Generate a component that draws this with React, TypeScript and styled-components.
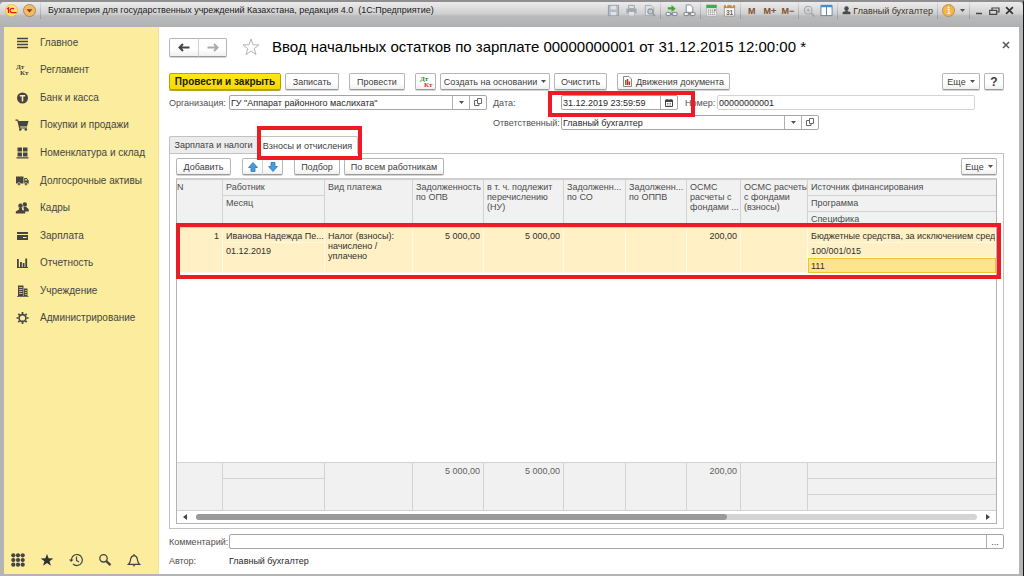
import React from 'react';
import styled, { createGlobalStyle, css } from 'styled-components';

const Global = createGlobalStyle`
  * { box-sizing: border-box; }
  body { margin: 0; background: #9b9b9d; }
  body, button, input, table {
    font-family: "Liberation Sans", Arial, sans-serif;
    font-size: 9px;
    line-height: 10px;
    color: #3c3c3c;
  }
  button { padding: 0; cursor: default; }
  svg { display: block; flex: none; }
`;

/* ---------- window frame ---------- */

const Window = styled.div`
  display: flex;
  flex-direction: column;
  height: 100vh;
  min-height: 480px;
  border-top: 2px solid #908e90;
  border-right: 1px solid #161616;
`;

const TitleBar = styled.header`
  display: flex;
  align-items: flex-start;
  height: 25px;
  flex: none;
  padding: 0 9px 0 5px;
  border-radius: 4px 4px 0 0;
  background: linear-gradient(#ececec, #cfcfd0 12px, #b9babc 14px, #b0b1b3);
`;

const BarGroup = styled.div<{ $gap: number }>`
  display: flex;
  align-items: center;
  height: 17px;
  gap: ${p => p.$gap}px;
`;

const BarButton = styled.button`
  display: flex;
  align-items: center;
  justify-content: center;
  gap: 2px;
  border: 0;
  background: none;
  color: #403020;
`;

const MemoryButton = styled(BarButton)`
  min-width: 13px;
  font-weight: bold;
  color: #80502c;
`;

const BarLine = styled.span`
  width: 1px;
  height: 17px;
  margin: 0 -1px;
  background: linear-gradient(#dcdcdc, #999);
`;

const Caption = styled.span`
  flex: 1;
  padding-left: 8px;
  line-height: 17px;
  color: #202020;
  white-space: pre;
  overflow: hidden;
`;

const Body = styled.div`
  display: flex;
  flex: 1;
  min-height: 0;
  border: solid #b4b4b6;
  border-width: 0 4px 2px 4px;
  background: #fff;
`;

/* ---------- side panel ---------- */

const Sidebar = styled.nav`
  display: flex;
  flex-direction: column;
  justify-content: space-between;
  flex: none;
  width: 155px;
  border-right: 1px solid #efe09a;
  background: #fbec9e;
`;

const Sections = styled.div`
  display: flex;
  flex-direction: column;
  height: 305px;
  padding-top: 2px;
`;

const Section = styled.a`
  display: flex;
  flex: 1;
  align-items: center;
  gap: 11px;
  padding-left: 11px;
  font-size: 10px;
  line-height: 12px;
  color: #454545;
  text-decoration: none;
  white-space: nowrap;
`;

const Tools = styled.div`
  display: flex;
  gap: 15px;
  padding: 0 7px 7px;
`;

const ToolButton = styled.button`
  width: 14px;
  height: 14px;
  border: 0;
  background: none;
`;

/* ---------- form ---------- */

const Form = styled.main`
  display: flex;
  flex-direction: column;
  flex: 1;
  min-width: 0;
  padding: 10px 15px 6px 10px;
`;

const Heading = styled.div`
  display: flex;
  align-items: center;
  height: 20px;
  flex: none;
`;

const Title = styled.h1`
  flex: 1;
  margin: 0 0 0 12px;
  font-size: 15px;
  line-height: 18px;
  font-weight: normal;
  color: #000;
  white-space: nowrap;
`;

const CloseButton = styled.button`
  width: 9px;
  height: 9px;
  margin: 0 -7px 4px 0;
  border: 0;
  background: none;
`;

const Button = styled.button<{ $primary?: boolean; $w?: number }>`
  display: flex;
  align-items: center;
  justify-content: center;
  gap: 4px;
  height: 17px;
  width: ${p => (p.$w ? p.$w + 'px' : 'auto')};
  border: 1px solid #b5b5b5;
  border-bottom-color: #9a9a9a;
  border-radius: 2px;
  background: linear-gradient(#fff, #fff 60%, #f0f0f0);
  box-shadow: 0 1px 0 #d5d5d5;
  white-space: nowrap;
  ${p => p.$primary && css`
    border-color: #b8a200;
    background: linear-gradient(#ffe81a, #f5d800);
    box-shadow: 0 1px 0 #b4a02c;
    font-size: 10px;
    font-weight: bold;
    color: #1e1a00;
  `}
`;

const HelpButton = styled(Button)`
  font-size: 12px;
  font-weight: bold;
`;

const Pair = styled.div`
  display: flex;
  button + button { border-left-color: #d0d0d0; border-radius: 0 2px 2px 0; margin-left: -1px; }
  button:first-child { border-radius: 2px 0 0 2px; }
`;

const HistoryPair = styled(Pair)`
  margin-right: 15px;
  button { height: 19px; }
`;

const Toolbar = styled.div`
  display: flex;
  height: 17px;
  flex: none;
`;

const CommandBar = styled(Toolbar)`
  margin-top: 16px;
`;

const Cluster = styled.div<{ $after?: number }>`
  display: flex;
  gap: 4px;
  margin-right: ${p => p.$after ?? 10}px;
`;

const Spacer = styled.span`
  flex: 1;
`;

const FieldRow = styled.div`
  display: flex;
  height: 15px;
  flex: none;
  margin-top: 5px;
`;

const AuthorRow = styled(FieldRow)`
  margin-top: 4px;
`;

const Label = styled.label<{ $w: number; $indent?: number }>`
  flex: none;
  width: ${p => p.$w}px;
  margin-left: ${p => p.$indent ?? 0}px;
  line-height: 16px;
  color: #505050;
  white-space: nowrap;
`;

const Field = styled.div<{ $w?: number; $after?: number; $pale?: boolean }>`
  display: flex;
  position: relative;
  flex: ${p => (p.$w ? 'none' : '1')};
  width: ${p => (p.$w ? p.$w + 'px' : 'auto')};
  height: 15px;
  margin-right: ${p => p.$after ?? 0}px;
  border: 1px solid ${p => (p.$pale ? '#d4d4d4' : '#a6a6a6')};
  border-radius: 2px;
  background: #fff;
`;

const Input = styled.input`
  flex: 1;
  min-width: 0;
  height: 13px;
  padding: 0 1px;
  border: 0;
  outline: 0;
  background: none;
  color: #282828;
`;

const FieldButton = styled.button`
  display: flex;
  align-items: center;
  justify-content: center;
  width: 17px;
  height: 13px;
  border: 0;
  border-left: 1px solid #b0b0b0;
  background: none;
`;

const Marker = styled.span`
  position: absolute;
  z-index: 2;
  border: 4px solid #ed1c24;
  pointer-events: none;
`;

const DateMarker = styled(Marker)`
  inset: -5px -18px -8px -14px;
`;

const TabMarker = styled(Marker)`
  inset: -11px -5px -6px -1px;
`;

const RowMarker = styled(Marker)`
  top: 43px;
  left: -1px;
  right: -5px;
  height: 56px;
`;

/* ---------- tabs and table ---------- */

const Tabs = styled.div`
  display: flex;
  flex: none;
  height: 17px;
  margin-top: 6px;
`;

const Tab = styled.button<{ $active?: boolean }>`
  position: relative;
  width: ${p => (p.$active ? 101 : 89)}px;
  height: ${p => (p.$active ? 18 : 17)}px;
  border: 1px solid #c2c2c2;
  border-bottom: 0;
  border-radius: 2px 2px 0 0;
  background: ${p => (p.$active ? '#fff' : '#ececec')};
  white-space: nowrap;
  & + & { margin-left: -1px; }
`;

const Panel = styled.section`
  display: flex;
  flex-direction: column;
  flex: 1;
  min-height: 0;
  padding: 4px 6px;
  border: 1px solid #c2c2c2;
`;

const Frame = styled.div`
  position: relative;
  display: flex;
  flex-direction: column;
  flex: 1;
  min-height: 0;
  margin-top: 3px;
  border: 1px solid #b4b4b4;
  border-top-width: 2px;
  border-top-color: #cfcfcf;
`;

const TableBox = styled.div`
  flex: 1;
  min-height: 0;
`;

const Table = styled.table`
  width: 100%;
  height: 100%;
  table-layout: fixed;
  border-collapse: separate;
  border-spacing: 0;
`;

const Col = styled.col<{ $w?: number }>`
  width: ${p => (p.$w ? p.$w + 'px' : 'auto')};
`;

const HeadCell = styled.th<{ $flush?: boolean }>`
  height: 16px;
  padding: 2px 0 0 ${p => (p.$flush ? 0 : 3)}px;
  border: solid #d2d2d2;
  border-width: 0 1px 1px 0;
  background: #f1f1f1;
  font-weight: normal;
  text-align: left;
  vertical-align: top;
  white-space: pre;
  overflow: hidden;
  color: #4c4c4c;
  &:last-child { border-right: 0; }
`;

const DataCell = styled.td<{ $num?: boolean; $focus?: boolean }>`
  height: 15px;
  padding: ${p => (p.$num ? '3px 3px 0 0' : '3px 0 0 3px')};
  border: solid #fff9e6;
  border-width: 0 1px 1px 0;
  background: #fff1c5;
  text-align: ${p => (p.$num ? 'right' : 'left')};
  vertical-align: top;
  white-space: pre;
  overflow: hidden;
  color: #303030;
  ${p => p.$focus && css`
    padding: 2px 0 0 2px;
    border: 1px solid #f2c230;
    background: #ffe48c;
  `}
`;

const EmptyCell = styled.td`
  padding: 0;
  background: #fff;
`;

const FootCell = styled.td<{ $first?: boolean }>`
  height: ${p => (p.$first ? 17 : 16)}px;
  padding: 3px 3px 0 0;
  border: solid #d2d2d2;
  border-width: ${p => (p.$first ? '1px 1px 1px 0' : '0 1px 1px 0')};
  background: #f1f1f1;
  text-align: right;
  vertical-align: top;
  color: #606060;
  &:last-child { border-right: 0; }
`;

const Scroll = styled.div`
  display: flex;
  align-items: center;
  gap: 9px;
  height: 12px;
  flex: none;
  padding: 0 6px;
  background: #fff;
`;

const Track = styled.div`
  flex: 1;
  height: 6px;
  border-radius: 3px;
  background: #d4d4d4;
`;

const Thumb = styled.div`
  width: 68%;
  height: 6px;
  border-radius: 3px;
  background: #999;
`;

const Value = styled.output`
  line-height: 16px;
  color: #282828;
`;

/* ---------- icons ---------- */

const Icon = ({ size = 14, children }: { size?: number; children: React.ReactNode }) => (
  <svg width={size} height={size} viewBox="0 0 14 14" fill="none" stroke="none">{children}</svg>
);

const DtKt = ({ a, b }: { a: string; b: string }) => (
  <svg width="14" height="14" viewBox="0 0 14 14" fontFamily="Liberation Serif, serif" fontWeight="bold" fontSize="7">
    <text x="1" y="6" fill={a}>Дт</text>
    <text x="5" y="12" fill={b}>Кт</text>
  </svg>
);

const Caret = () => (
  <svg width="5" height="3" viewBox="0 0 5 3"><path d="M0 0h5L2.500 3z" fill="#505050" /></svg>
);

const OpenIcon = () => (
  <svg width="9" height="9" viewBox="0 0 9 9" fill="none" stroke="#666">
    <path d="M3.500 .5h4v5h-4zM3.500 2.500h-3v5h4.500v-2" />
  </svg>
);

const Arrow = ({ back, color }: { back?: boolean; color: string }) => (
  <svg width="12" height="9" viewBox="0 0 12 9" fill="none" stroke={color} strokeWidth="2">
    <path d={back ? 'M11.500 4.500H2M5 1 1.500 4.500 5 8' : 'M.5 4.500H10M7 1l3.500 3.500L7 8'} />
  </svg>
);

const BlueArrow = ({ down }: { down?: boolean }) => (
  <svg width="10" height="10" viewBox="0 0 10 10">
    <path d={down ? 'M3 .5h4v4h2.500L5 9.500.5 4.500H3z' : 'M3 9.500h4v-4h2.500L5 .5.5 5.500H3z'} fill="#459de0" stroke="#2a79b9" strokeWidth=".8" />
  </svg>
);

const ink = '#444';

const sections: { name: string; icon: React.ReactNode }[] = [
  { name: 'Главное', icon: <Icon><path d="M2 2.500h11M2 5.500h11M2 8.500h11M2 11.500h11" stroke={ink} strokeWidth="1.500" /></Icon> },
  { name: 'Регламент', icon: <DtKt a={ink} b={ink} /> },
  { name: 'Банк и касса', icon: <Icon><circle cx="7.500" cy="7" r="5.500" fill={ink} /><path d="M4.800 4.800h5.400M7.500 4.800v5.700" stroke="#fbec9e" strokeWidth="1.600" /></Icon> },
  { name: 'Покупки и продажи', icon: <Icon><path d="M.5 1.500h2.500l.6 1.500H13.500l-1.500 5.500H4.800l.4 1H12v1H4.200L2.300 2.700H.5z" fill={ink} /><circle cx="5.300" cy="11.500" r="1.300" fill={ink} /><circle cx="10.800" cy="11.500" r="1.300" fill={ink} /></Icon> },
  { name: 'Номенклатура и склад', icon: <Icon><path d="M2.500 1.500h4.500v4H2.500zM8 1.500h4.500v4H8zM2.500 6.500h4.500v4H2.500zM8 6.500h4.500v4H8zM1.500 11.300h12v1.200h-12z" fill={ink} /></Icon> },
  { name: 'Долгосрочные активы', icon: <Icon><path d="M1 2.500h7.500v7H1zM9.200 4h2.600l1.900 2.500v3H9.200z" fill={ink} /><path d="M10.200 5h1.300l1 1.500h-2.300z" fill="#fbec9e" /><circle cx="4" cy="10" r="1.500" fill={ink} stroke="#fbec9e" strokeWidth=".6" /><circle cx="11" cy="10" r="1.500" fill={ink} stroke="#fbec9e" strokeWidth=".6" /></Icon> },
  { name: 'Кадры', icon: <Icon><circle cx="9.800" cy="3.500" r="2.200" fill={ink} /><path d="M8.500 6h2.800l2.400 2.200V10.500H9z" fill={ink} /><circle cx="5.500" cy="4.800" r="2.500" fill={ink} stroke="#fbec9e" strokeWidth=".5" /><path d="M.8 12.500V10.500L4 8.500V7h3v1.500l3.200 2v2z" fill={ink} /></Icon> },
  { name: 'Зарплата', icon: <Icon><path d="M2 3h11v2H2zM2 6h11v5H2z" fill={ink} /><path d="M8 8.500h3.500" stroke="#fbec9e" /></Icon> },
  { name: 'Отчетность', icon: <Icon><path d="M2 3h1.800v8H2zM5 6h1.800v5H5zM7.700 7h1.800v4H7.700zM10.300 2.500h1.800V11h-1.800zM2 11h11v1H2z" fill={ink} /></Icon> },
  { name: 'Учреждение', icon: <Icon><path d="M3 1.500h5.500v11H3zM9 4.500h3.500v8H9zM2 12h11.500v.8H2z" fill={ink} /><path d="M4 3.500h3.500M4 5.500h3.500M4 7.500h3.500M4 9.500h3.500M9.800 6.500h2M9.800 8.500h2M9.800 10.500h2" stroke="#fbec9e" strokeWidth=".7" /></Icon> },
  { name: 'Администрирование', icon: <Icon><circle cx="7.500" cy="7" r="3.400" stroke={ink} strokeWidth="1.600" /><path d="M7.500 1v2M7.500 11v2M1.500 7h2M11.500 7h2M3.300 2.800l1.300 1.300M10.400 9.900l1.300 1.300M3.300 11.200l1.300-1.300M10.400 4.100l1.300-1.300" stroke={ink} strokeWidth="1.700" /></Icon> },
];

const dots = [2.3, 7, 11.7];

const tools: { name: string; icon: React.ReactNode }[] = [
  { name: 'Меню', icon: <Icon>{dots.map(y => dots.map(x => <circle key={x + '-' + y} cx={x} cy={y} r="2.100" fill={ink} />))}</Icon> },
  { name: 'Избранное', icon: <Icon><path d="M7 1l1.600 4.300 4.700.1-3.700 2.800 1.300 4.500L7 10.100l-3.900 2.600 1.300-4.500L.7 5.400l4.700-.1z" fill="#333" /></Icon> },
  { name: 'История', icon: <Icon><path d="M2.300 7a5.500 5.500 0 1 1 1.700 4M7.500 3.500V7.500l2.500 1.500" stroke={ink} strokeWidth="1.200" /><path d="M0 6.500h4.500L2.200 9z" fill={ink} /></Icon> },
  { name: 'Поиск', icon: <Icon><circle cx="5.500" cy="5.300" r="3.700" stroke={ink} strokeWidth="1.300" /><path d="M8.300 8.100l4.200 4" stroke={ink} strokeWidth="2.200" /></Icon> },
  { name: 'Оповещения', icon: <Icon><path d="M1.500 11.300c2-1.500 1.700-3.500 2.200-5.500C4.200 3.700 5.300 2.700 7 2.700s2.800 1 3.300 3.100c.5 2 .2 4 2.200 5.500zM7 1v1.700" stroke={ink} strokeWidth="1.200" /><path d="M5.500 12.200h3l-1.500 1.500z" fill={ink} /></Icon> },
];

const Floppy = () => <Icon size={13}><path d="M1.500 1.500h11v11h-11z" fill="#b4bdc5" stroke="#929ca4" /><path d="M4 2h6v4H4zM4 8.500h6V12H4z" fill="#dfe3e6" /></Icon>;
const Printer = () => <Icon size={13}><path d="M4 1.500h6V5H4zM4 9h6v3.500H4z" fill="#dfe3e6" stroke="#98a1a8" /><path d="M1.500 5h11v5h-11z" fill="#a0a9b0" /><path d="M4 8.500h6v4H4z" fill="#dfe3e6" /></Icon>;
const Preview = () => <Icon size={13}><path d="M2.500 1.500h6l3 3v8h-9z" fill="#dfe3e6" stroke="#a0a8ae" /><circle cx="8" cy="8" r="2.800" fill="#c3ccd3" stroke="#8d979f" strokeWidth="1.200" /><path d="M10 10l3 3" stroke="#8d979f" strokeWidth="1.600" /></Icon>;
const Chain = () => <><rect x="1" y="9" width="5.500" height="3.500" rx="1.500" fill="#eee" stroke="#6b7680" /><rect x="7.500" y="9" width="5.500" height="3.500" rx="1.500" fill="#eee" stroke="#6b7680" /><path d="M5 10.800h4" stroke="#6b7680" /></>;
const AddLink = () => <Icon size={13}><Chain /><path d="M3 3.500h4V1l4.500 4L7 8.500V6H3z" fill="#3fa535" /></Icon>;
const PageLink = () => <Icon size={13}><path d="M3.500 1h4.500l2.500 2.500V9h-7z" fill="#fff" stroke="#7c8790" /><Chain /></Icon>;
const Calculator = () => <Icon size={13}><path d="M1.500 1h11v12h-11z" fill="#f3f3f3" stroke="#999" strokeWidth=".6" /><path d="M1.500 1h11v3.500h-11z" fill="#3fae49" /><path d="M3 6.500h8M3 8.800h8M3 11.100h8" stroke="#9a9a9a" strokeWidth="1.300" strokeDasharray="1.500 .7" /><path d="M10 6.500h1.500" stroke="#d34" strokeWidth="1.300" /></Icon>;
const CalendarBig = () => <Icon size={13}><path d="M1.500 2h11v11h-11z" fill="#fafafa" stroke="#9b8878" strokeWidth=".8" /><path d="M1 1.500h12v3H1z" fill="#c78646" /><path d="M4 0v3M10 0v3" stroke="#fff" /><text x="3.200" y="11.500" fontSize="7" fontWeight="bold" fill="#666">31</text></Icon>;
const Zoom = () => <Icon size={12}><circle cx="6" cy="6" r="4.500" stroke="#a2a6aa" strokeWidth="1.300" /><path d="M9.500 9.500l4 4" stroke="#a2a6aa" strokeWidth="2" /><path d="M3.800 6h4.400M6 3.800v4.400" stroke="#a2a6aa" /></Icon>;
const Panes = () => <Icon size={13}><path d="M1 1.500h12v11H1z" fill="#fff" stroke="#5f7f9f" /><path d="M1 1h12v2.500H1z" fill="#3d8fd8" /><path d="M7 3v9.500" stroke="#5f7f9f" /></Icon>;
const Person = () => <Icon size={9}><circle cx="7" cy="4" r="3.500" fill="#4a4a4a" /><path d="M5.500 6h3v3h-3zM1 13V9.500l4-1.500h4l4 1.500V13z" fill="#4a4a4a" /></Icon>;

const Logo = () => (
  <svg width="13" height="13" viewBox="0 0 13 13">
    <circle cx="6.500" cy="6.500" r="6" fill="#ffe668" stroke="#e8b84a" strokeWidth=".8" />
    <path d="M2 5l1.500-1v5" fill="none" stroke="#d8141c" strokeWidth="1.300" />
    <path d="M9 5.200a2.200 2.200 0 1 0-1.800 3.500H11.500" fill="none" stroke="#d8141c" strokeWidth="1.200" />
  </svg>
);
const MenuDrop = () => (
  <svg width="13" height="13" viewBox="0 0 13 13">
    <circle cx="6.500" cy="6.500" r="6" fill="#f6b865" stroke="#9b7b52" strokeWidth=".8" />
    <path d="M3.500 5.300h6l-3 3.200z" fill="#6a4420" />
  </svg>
);
const Info = () => (
  <svg width="13" height="13" viewBox="0 0 13 13">
    <circle cx="6.500" cy="6.500" r="6" fill="#f5b44c" stroke="#b48334" strokeWidth=".8" />
    <circle cx="6.500" cy="3.500" r="1" fill="#fff" /><path d="M5.500 5.500h1.500v4M5.300 9.500h3" stroke="#fff" strokeWidth="1.200" fill="none" />
  </svg>
);
const SmallCalendar = () => (
  <svg width="8" height="8" viewBox="0 0 8 8"><path d="M.5 1h7v6.500h-7z" fill="#fff" stroke="#444" /><path d="M0 1h8v2H0z" fill="#444" /><path d="M2 0v2M6 0v2" stroke="#444" /><path d="M2 4.500h4M2 6h4" stroke="#666" strokeWidth=".8" strokeDasharray="1 .5" /></svg>
);
const Report = () => (
  <svg width="9" height="11" viewBox="0 0 9 11"><path d="M.5 .5h5.500l2.500 2.500v7.500h-8z" fill="#fff" stroke="#888" /><path d="M2 4h1.500v5H2z" fill="#3a9a3a" /><path d="M3.800 3h1.500v6H3.800z" fill="#d22" /><path d="M5.600 5.500h1.500V9H5.600z" fill="#c22" /></svg>
);
const CloseIcon = ({ size = 8, color = '#555' }: { size?: number; color?: string }) => (
  <svg width={size} height={size} viewBox="0 0 8 8"><path d="M1 1l6 6M7 1L1 7" stroke={color} strokeWidth="1.500" /></svg>
);

const columns = [46, 102, 88, 71, 80, 62, 61, 54, 67, undefined];

const totals = ['', '', '', '5 000,00', '5 000,00', '', '', '200,00', ''];

export default function App() {
  return (
    <>
      <Global />
      <Window>
        <TitleBar>
          <BarGroup $gap={5}>
            <Logo />
            <BarButton aria-label="Главное меню"><MenuDrop /></BarButton>
            <BarLine />
          </BarGroup>
          <Caption>Бухгалтерия для государственных учреждений Казахстана, редакция 4.0  (1С:Предприятие)</Caption>
          <BarGroup $gap={5}>
            <BarButton aria-label="Сохранить"><Floppy /></BarButton>
            <BarButton aria-label="Печать"><Printer /></BarButton>
            <BarButton aria-label="Просмотр"><Preview /></BarButton>
            <BarLine />
            <BarButton aria-label="Добавить ссылку"><AddLink /></BarButton>
            <BarButton aria-label="Ссылка"><PageLink /></BarButton>
            <BarLine />
            <BarButton aria-label="Калькулятор"><Calculator /></BarButton>
            <BarButton aria-label="Календарь"><CalendarBig /></BarButton>
            <BarLine />
            <MemoryButton>M</MemoryButton>
            <MemoryButton>M+</MemoryButton>
            <MemoryButton>M−</MemoryButton>
            <BarLine />
            <BarButton aria-label="Масштаб"><Zoom /></BarButton>
            <BarButton aria-label="Панели"><Panes /></BarButton>
            <BarLine />
            <BarButton><Person />Главный бухгалтер</BarButton>
            <BarLine />
            <BarButton aria-label="Справка"><Info /></BarButton>
            <BarButton aria-label="Ещё"><Caret /></BarButton>
            <BarLine />
            <BarButton aria-label="Свернуть"><svg width="10" height="8" viewBox="0 0 10 8"><path d="M2 6.500h6" stroke="#444" strokeWidth="1.500" /></svg></BarButton>
            <BarButton aria-label="Восстановить"><svg width="11" height="8" viewBox="0 0 11 8"><path d="M3 3V1h7v4H8M.7 3.300h7v4h-7z" fill="none" stroke="#444" strokeWidth="1.200" /></svg></BarButton>
            <BarButton aria-label="Закрыть программу"><CloseIcon size={9} color="#333" /></BarButton>
          </BarGroup>
        </TitleBar>

        <Body>
          <Sidebar>
            <Sections>
              {sections.map(s => <Section key={s.name} href="#">{s.icon}{s.name}</Section>)}
            </Sections>
            <Tools>
              {tools.map(t => <ToolButton key={t.name} aria-label={t.name}>{t.icon}</ToolButton>)}
            </Tools>
          </Sidebar>

          <Form>
            <Heading>
              <HistoryPair>
                <Button $w={30} aria-label="Назад"><Arrow back color="#444" /></Button>
                <Button $w={29} aria-label="Вперед"><Arrow color="#aaa" /></Button>
              </HistoryPair>
              <svg width="18" height="18" viewBox="0 0 18 18"><path d="M9 1l2 5.800 6 .1-4.800 3.700 1.800 6L9 13l-5 3.600 1.800-6L1 6.900l6-.1z" fill="none" stroke="#b4b4b4" /></svg>
              <Title>Ввод начальных остатков по зарплате 00000000001 от 31.12.2015 12:00:00 *</Title>
              <CloseButton aria-label="Закрыть"><CloseIcon /></CloseButton>
            </Heading>

            <CommandBar>
              <Cluster>
                <Button $primary $w={112}>Провести и закрыть</Button>
                <Button $w={54}>Записать</Button>
              </Cluster>
              <Cluster><Button $w={56}>Провести</Button></Cluster>
              <Cluster>
                <Button $w={21} aria-label="Дт Кт"><DtKt a="#2a8a2a" b="#e03030" /></Button>
                <Button $w={110}>Создать на основании<Caret /></Button>
                <Button $w={53}>Очистить</Button>
              </Cluster>
              <Button $w={113}><Report />Движения документа</Button>
              <Spacer />
              <Cluster $after={0}>
                <Button $w={38}>Еще<Caret /></Button>
                <HelpButton $w={20}>?</HelpButton>
              </Cluster>
            </CommandBar>

            <FieldRow>
              <Label htmlFor="org" $w={60}>Организация:</Label>
              <Field $w={258} $after={6}>
                <Input id="org" defaultValue={'ГУ "Аппарат районного маслихата"'} />
                <FieldButton aria-label="Выбрать"><Caret /></FieldButton>
                <FieldButton aria-label="Открыть"><OpenIcon /></FieldButton>
              </Field>
              <Label htmlFor="date" $w={68}>Дата:</Label>
              <Field $w={117} $after={7}>
                <Input id="date" defaultValue="31.12.2019 23:59:59" />
                <FieldButton aria-label="Календарь"><SmallCalendar /></FieldButton>
                <DateMarker />
              </Field>
              <Label htmlFor="number" $w={32}>Номер:</Label>
              <Field $w={258} $pale><Input id="number" defaultValue="00000000001" /></Field>
            </FieldRow>

            <FieldRow>
              <Label htmlFor="resp" $indent={324} $w={68}>Ответственный:</Label>
              <Field $w={258}>
                <Input id="resp" defaultValue="Главный бухгалтер" />
                <FieldButton aria-label="Выбрать"><Caret /></FieldButton>
                <FieldButton aria-label="Открыть"><OpenIcon /></FieldButton>
              </Field>
            </FieldRow>

            <Tabs role="tablist">
              <Tab role="tab">Зарплата и налоги</Tab>
              <Tab role="tab" aria-selected $active>Взносы и отчисления<TabMarker /></Tab>
            </Tabs>

            <Panel>
              <Toolbar>
                <Cluster $after={11}><Button $w={55}>Добавить</Button></Cluster>
                <Cluster $after={11}>
                  <Pair>
                    <Button $w={21} aria-label="Вверх"><BlueArrow /></Button>
                    <Button $w={21} aria-label="Вниз"><BlueArrow down /></Button>
                  </Pair>
                </Cluster>
                <Cluster $after={0}>
                  <Button $w={46}>Подбор</Button>
                  <Button $w={100}>По всем работникам</Button>
                </Cluster>
                <Spacer />
                <Button $w={36}>Еще<Caret /></Button>
              </Toolbar>

              <Frame>
                <TableBox>
                  <Table>
                    <colgroup>{columns.map((w, i) => <Col key={i} $w={w} />)}</colgroup>
                    <thead>
                      <tr>
                        <HeadCell rowSpan={3} $flush>N</HeadCell>
                        <HeadCell>Работник</HeadCell>
                        <HeadCell rowSpan={3}>Вид платежа</HeadCell>
                        <HeadCell rowSpan={3}>{'Задолженность\nпо ОПВ'}</HeadCell>
                        <HeadCell rowSpan={3}>{'в т. ч. подлежит\nперечислению\n(НУ)'}</HeadCell>
                        <HeadCell rowSpan={3}>{'Задолженн...\nпо СО'}</HeadCell>
                        <HeadCell rowSpan={3}>{'Задолженн...\nпо ОППВ'}</HeadCell>
                        <HeadCell rowSpan={3}>{'ОСМС\nрасчеты с\nфондами ...'}</HeadCell>
                        <HeadCell rowSpan={3}>{'ОСМС расчеты\nс фондами\n(взносы)'}</HeadCell>
                        <HeadCell>Источник финансирования</HeadCell>
                      </tr>
                      <tr>
                        <HeadCell rowSpan={2}>Месяц</HeadCell>
                        <HeadCell>Программа</HeadCell>
                      </tr>
                      <tr><HeadCell>Специфика</HeadCell></tr>
                    </thead>
                    <tbody>
                      <tr>
                        <DataCell rowSpan={3} $num>1</DataCell>
                        <DataCell>Иванова Надежда Пе...</DataCell>
                        <DataCell rowSpan={3}>{'Налог (взносы):\nначислено /\nуплачено'}</DataCell>
                        <DataCell rowSpan={3} $num>5 000,00</DataCell>
                        <DataCell rowSpan={3} $num>5 000,00</DataCell>
                        <DataCell rowSpan={3} />
                        <DataCell rowSpan={3} />
                        <DataCell rowSpan={3} $num>200,00</DataCell>
                        <DataCell rowSpan={3} />
                        <DataCell>Бюджетные средства, за исключением средст</DataCell>
                      </tr>
                      <tr>
                        <DataCell rowSpan={2}>01.12.2019</DataCell>
                        <DataCell>100/001/015</DataCell>
                      </tr>
                      <tr><DataCell $focus>111</DataCell></tr>
                      <tr><EmptyCell colSpan={10} /></tr>
                    </tbody>
                    <tfoot>
                      <tr>
                        {totals.map((t, i) => <FootCell key={i} $first rowSpan={i === 1 ? 1 : 3}>{t}</FootCell>)}
                        <FootCell $first />
                      </tr>
                      <tr><FootCell rowSpan={2} /><FootCell /></tr>
                      <tr><FootCell /></tr>
                    </tfoot>
                  </Table>
                </TableBox>
                <Scroll>
                  <svg width="4" height="6" viewBox="0 0 4 6"><path d="M4 0v6L0 3z" fill="#444" /></svg>
                  <Track><Thumb /></Track>
                  <svg width="4" height="6" viewBox="0 0 4 6"><path d="M0 0v6l4-3z" fill="#444" /></svg>
                </Scroll>
                <RowMarker />
              </Frame>
            </Panel>

            <FieldRow>
              <Label htmlFor="comment" $w={60}>Комментарий:</Label>
              <Field>
                <Input id="comment" />
                <FieldButton aria-label="Открыть комментарий">...</FieldButton>
              </Field>
            </FieldRow>
            <AuthorRow>
              <Label htmlFor="author" $w={60}>Автор:</Label>
              <Value id="author">Главный бухгалтер</Value>
            </AuthorRow>
          </Form>
        </Body>
      </Window>
    </>
  );
}
